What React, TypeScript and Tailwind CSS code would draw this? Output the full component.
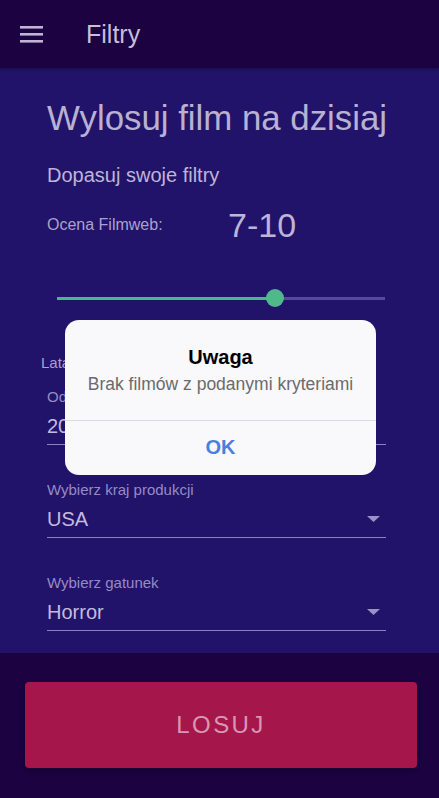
import React from 'react'

const font = { fontFamily: '"Liberation Sans", Arial, sans-serif' }

function MenuIcon() {
  return (
    <svg width="23" height="17" viewBox="0 0 23 17" className="text-[#bdb4d8]">
      <rect x="0" y="0" width="23" height="2.6" fill="currentColor" />
      <rect x="0" y="7" width="23" height="2.6" fill="currentColor" />
      <rect x="0" y="14" width="23" height="2.6" fill="currentColor" />
    </svg>
  )
}

function SelectField({ label, value, arrow = true }: { label: string; value: string; arrow?: boolean }) {
  return (
    <div className="border-b border-[#8a80c2] pb-[4px]">
      <div className="text-[15px] leading-[18px] text-[#958bc4]">{label}</div>
      <div className="mt-[6px] flex items-center justify-between">
        <span className="text-[20px] leading-[28px] text-[#c3bbdf]">{value}</span>
        {arrow && (
          <svg width="13" height="6" viewBox="0 0 13 6" className="mr-[6px]">
            <polygon points="0,0 13,0 6.5,6" fill="#9a92c6" />
          </svg>
        )}
      </div>
    </div>
  )
}

export default function App() {
  return (
    <div style={font} className="relative flex h-[798px] flex-col bg-[#22136a]">
      <header className="flex h-[68px] shrink-0 items-center bg-[#1c0241] px-[20px] shadow-[0_2px_3px_rgba(0,0,0,0.25)]">
        <MenuIcon />
        <span className="ml-[43px] text-[25px] leading-[28px] text-[#c5bddc]">Filtry</span>
      </header>

      <main className="flex-1 pl-[47px] pr-[53px] pt-[30px]">
        <h1 className="whitespace-nowrap text-[34.8px] leading-[40px] text-[#b9b1d2]">Wylosuj film na dzisiaj</h1>
        <h2 className="mt-[25px] text-[20px] leading-[24px] text-[#bdb5d6]">Dopasuj swoje filtry</h2>

        <div className="mt-[18px] flex items-center">
          <span className="w-[181px] text-[16px] leading-[18px] text-[#aaa2cc]">Ocena Filmweb:</span>
          <span className="text-[34px] leading-[40px] text-[#bdb5d6]">7-10</span>
        </div>

        <div className="relative mt-[43px] ml-[10px] mr-[1px] h-[20px]">
          <div className="absolute left-0 right-0 top-[8.5px] h-[3px] bg-[#574a9c]" />
          <div className="absolute left-0 top-[8.5px] h-[3px] w-[218px] bg-[#4cb688]" />
          <div className="absolute left-[209px] top-[1px] h-[18px] w-[18px] rounded-full bg-[#50b98a]" />
        </div>

        <div className="-ml-[6px] mt-[46px] text-[15px] leading-[18px] text-[#a9a1cb]">Lata produkcji</div>

        <div className="mt-[16px] flex flex-col gap-[36px]">
          <SelectField label="Od roku" value="2000" arrow={false} />
          <SelectField label="Wybierz kraj produkcji" value="USA" />
          <SelectField label="Wybierz gatunek" value="Horror" />
        </div>
      </main>

      <footer className="h-[145px] shrink-0 bg-[#1c0241] pl-[25px] pr-[22px] pt-[29px]">
        <button className="flex h-[86px] w-full items-center justify-center rounded-[4px] bg-[#a5174a] text-[24px] tracking-[0.1em] text-[#d896b6] shadow-[0_2px_4px_rgba(0,0,0,0.3)]">
          LOSUJ
        </button>
      </footer>

      <div className="absolute inset-0 flex items-center justify-center">
        <div className="w-[311px] translate-x-[1px] -translate-y-[2px] rounded-[14px] bg-[#f9f8fb] text-center">
          <div className="pt-[25px] text-[20px] font-bold leading-[24px] text-black">Uwaga</div>
          <div className="mt-[4px] text-[17.5px] leading-[22px] text-[#6b6b6b]">Brak filmów z podanymi kryteriami</div>
          <div className="mt-[25px] border-t border-[#dcdce0]" />
          <div className="flex h-[54px] items-center justify-center pb-[2px] text-[20px] font-bold text-[#4a7fdc]">OK</div>
        </div>
      </div>
    </div>
  )
}
